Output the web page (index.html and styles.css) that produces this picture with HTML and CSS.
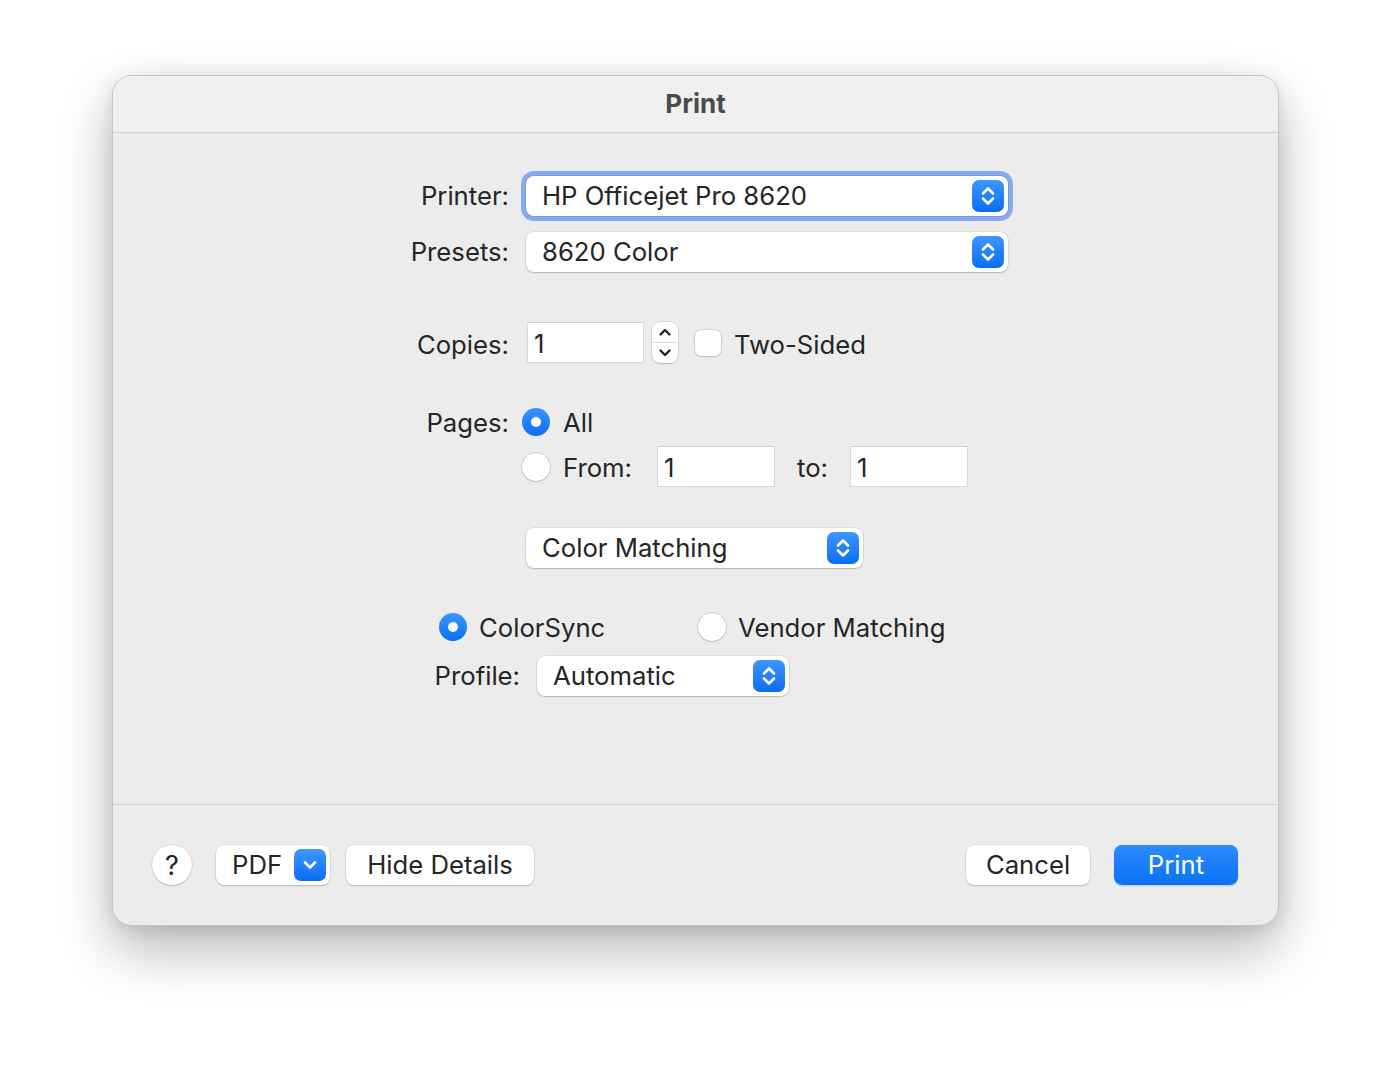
FILE: index.html
```html
<!DOCTYPE html>
<html>
<head>
<meta charset="utf-8">
<link rel="stylesheet" href="styles.css">
</head>
<body>
<div class="dialog">
  <div class="titlebar">Print</div>
  <div class="content">
    <div class="row r-printer">
      <div class="label">Printer:</div>
      <div class="popup focused w-wide">
        <span class="popup-text">HP Officejet Pro 8620</span>
        <svg class="pop-icon" width="32" height="32" viewBox="0 0 32 32"><defs><linearGradient id="g1" x1="0" y1="0" x2="0" y2="1"><stop offset="0" stop-color="#3d97ff"/><stop offset="1" stop-color="#0a6ef4"/></linearGradient></defs><rect width="32" height="32" rx="7" fill="url(#g1)"/><path d="M11 13.5 L16 8.5 L21 13.5 M11 18.5 L16 23.5 L21 18.5" fill="none" stroke="#fff" stroke-width="2.6" stroke-linecap="round" stroke-linejoin="round"/></svg>
      </div>
    </div>
    <div class="row r-presets">
      <div class="label">Presets:</div>
      <div class="popup w-wide">
        <span class="popup-text">8620 Color</span>
        <svg class="pop-icon" width="32" height="32" viewBox="0 0 32 32"><defs><linearGradient id="g2" x1="0" y1="0" x2="0" y2="1"><stop offset="0" stop-color="#3d97ff"/><stop offset="1" stop-color="#0a6ef4"/></linearGradient></defs><rect width="32" height="32" rx="7" fill="url(#g2)"/><path d="M11 13.5 L16 8.5 L21 13.5 M11 18.5 L16 23.5 L21 18.5" fill="none" stroke="#fff" stroke-width="2.6" stroke-linecap="round" stroke-linejoin="round"/></svg>
      </div>
    </div>
    <div class="row r-copies">
      <div class="label">Copies:</div>
      <div class="field f-copies">1</div>
      <div class="stepper">
        <svg width="26" height="41" viewBox="0 0 26 41"><path d="M8.5 12.5 L13 8 L17.5 12.5 M8.5 28.5 L13 33 L17.5 28.5" fill="none" stroke="#222" stroke-width="2.4" stroke-linecap="round" stroke-linejoin="round"/><line x1="1" y1="20.5" x2="25" y2="20.5" stroke="#dcdcdc" stroke-width="1"/></svg>
      </div>
      <div class="checkbox"></div>
      <span class="text t-two">Two-Sided</span>
    </div>
    <div class="row r-all">
      <div class="label">Pages:</div>
      <div class="radio on m13"></div>
      <span class="text t-rad">All</span>
    </div>
    <div class="row r-from">
      <div class="label"></div>
      <div class="radio m13"></div>
      <span class="text t-rad t-from">From:</span>
      <div class="field f-page">1</div>
      <span class="text t-to">to:</span>
      <div class="field f-page">1</div>
    </div>
    <div class="row r-cm">
      <div class="popup w-cm">
        <span class="popup-text">Color Matching</span>
        <svg class="pop-icon" width="32" height="32" viewBox="0 0 32 32"><defs><linearGradient id="g3" x1="0" y1="0" x2="0" y2="1"><stop offset="0" stop-color="#3d97ff"/><stop offset="1" stop-color="#0a6ef4"/></linearGradient></defs><rect width="32" height="32" rx="7" fill="url(#g3)"/><path d="M11 13.5 L16 8.5 L21 13.5 M11 18.5 L16 23.5 L21 18.5" fill="none" stroke="#fff" stroke-width="2.6" stroke-linecap="round" stroke-linejoin="round"/></svg>
      </div>
    </div>
    <div class="row r-sync">
      <div class="radio on"></div>
      <span class="text t-rad2 t-cs">ColorSync</span>
      <div class="radio"></div>
      <span class="text t-rad2">Vendor Matching</span>
    </div>
    <div class="row r-profile">
      <div class="label l-profile">Profile:</div>
      <div class="popup w-prof">
        <span class="popup-text">Automatic</span>
        <svg class="pop-icon" width="32" height="32" viewBox="0 0 32 32"><defs><linearGradient id="g4" x1="0" y1="0" x2="0" y2="1"><stop offset="0" stop-color="#3d97ff"/><stop offset="1" stop-color="#0a6ef4"/></linearGradient></defs><rect width="32" height="32" rx="7" fill="url(#g4)"/><path d="M11 13.5 L16 8.5 L21 13.5 M11 18.5 L16 23.5 L21 18.5" fill="none" stroke="#fff" stroke-width="2.6" stroke-linecap="round" stroke-linejoin="round"/></svg>
      </div>
    </div>
  </div>
  <div class="footer">
    <div class="left">
      <div class="help">?</div>
      <div class="btn b-pdf">
        <span>PDF</span>
        <svg class="pdf-icon" width="32" height="32" viewBox="0 0 32 32"><defs><linearGradient id="g5" x1="0" y1="0" x2="0" y2="1"><stop offset="0" stop-color="#3d97ff"/><stop offset="1" stop-color="#0a6ef4"/></linearGradient></defs><rect width="32" height="32" rx="7" fill="url(#g5)"/><path d="M11 13.5 L16 18.5 L21 13.5" fill="none" stroke="#fff" stroke-width="2.6" stroke-linecap="round" stroke-linejoin="round"/></svg>
      </div>
      <div class="btn b-hide">Hide Details</div>
    </div>
    <div class="right">
      <div class="btn b-cancel">Cancel</div>
      <div class="btn b-print">Print</div>
    </div>
  </div>
</div>
</body>
</html>
```

FILE: styles.css
```css
html, body {
  margin: 0;
  padding: 0;
}
body {
  background: #ffffff;
  font-family: "Inter", "Noto Sans", sans-serif;
  font-size: 25.7px;
  color: #252525;
  padding: 75px 0 0 112px;
  height: 1074px;
  box-sizing: border-box;
  overflow: hidden;
}
.dialog {
  width: 1167px;
  height: 851px;
  box-sizing: border-box;
  border: 1px solid #c4c4c4;
  border-radius: 20px;
  background: #ececec;
  box-shadow: 0 24px 55px rgba(0, 0, 0, 0.28), 0 4px 18px rgba(0, 0, 0, 0.1);
  display: flex;
  flex-direction: column;
  overflow: hidden;
}
.titlebar {
  height: 54px;
  padding-bottom: 2px;
  border-bottom: 1px solid #cfcfcf;
  background: #f0f0f0;
  display: flex;
  align-items: center;
  justify-content: center;
  font-weight: 700;
  color: #4b4b4b;
  font-size: 26px;
}
.content {
  height: 672px;
  box-sizing: border-box;
  padding-top: 43px;
  border-bottom: 1px solid #d2d2d2;
}
.row {
  display: flex;
  align-items: center;
}
.label {
  width: 396px;
  text-align: right;
  flex: none;
}
.popup {
  height: 40px;
  box-sizing: border-box;
  background: #ffffff;
  border-radius: 8px;
  box-shadow: 0 0 0 0.5px rgba(0, 0, 0, 0.12), 0 1px 1.5px rgba(0, 0, 0, 0.18);
  display: flex;
  align-items: center;
  justify-content: space-between;
  padding: 0 4px 0 16px;
  flex: none;
}
.popup-text {
  padding-bottom: 2px;
}
.popup.focused {
  box-shadow: 0 0 0 1px #6f9be9, 0 0 0 5px #8aaaee;
}
.pop-icon {
  display: block;
}
.w-wide {
  width: 482px;
  margin-left: 17px;
}
.r-printer {
  height: 40px;
}
.r-printer .label, .r-presets .label, .r-profile .label {
  padding-bottom: 2px;
}
.r-presets {
  height: 40px;
  margin-top: 16px;
}
.r-copies {
  height: 41px;
  margin-top: 50px;
}
.field {
  height: 41px;
  box-sizing: border-box;
  background: #ffffff;
  border: 1px solid #d9d9d9;
  border-top-color: #d0d0d0;
  display: flex;
  align-items: center;
  padding-left: 6px;
  padding-top: 2px;
  flex: none;
}
.f-copies {
  width: 117px;
  margin-left: 18px;
}
.stepper {
  width: 26px;
  height: 41px;
  margin-left: 8px;
  background: #ffffff;
  border-radius: 8px;
  box-shadow: 0 0 0 0.5px rgba(0, 0, 0, 0.14), 0 1px 1.5px rgba(0, 0, 0, 0.16);
  flex: none;
}
.stepper svg {
  display: block;
}
.checkbox {
  width: 26px;
  height: 26px;
  box-sizing: border-box;
  margin-left: 17px;
  background: #ffffff;
  border-radius: 6px;
  box-shadow: 0 0 0 0.5px rgba(0, 0, 0, 0.2), 0 1px 1.5px rgba(0, 0, 0, 0.12);
  flex: none;
}
.t-two {
  margin-left: 13px;
  padding-top: 3px;
}
.r-copies .label {
  padding-top: 3px;
}
.r-all {
  height: 40px;
  margin-top: 39px;
}
.r-from {
  height: 41px;
  margin-top: 4px;
}
.radio {
  width: 28px;
  height: 28px;
  border-radius: 50%;
  box-sizing: border-box;
  background: #ffffff;
  box-shadow: 0 0 0 0.5px rgba(0, 0, 0, 0.22), 0 1px 1.5px rgba(0, 0, 0, 0.12);
  flex: none;
  position: relative;
}
.radio.on {
  background: linear-gradient(#3a95ff, #0b6ff4);
  box-shadow: none;
}
.radio.on::after {
  content: "";
  position: absolute;
  left: 9px;
  top: 9px;
  width: 10px;
  height: 10px;
  border-radius: 50%;
  background: #ffffff;
}
.m13 {
  margin-left: 13px;
}
.t-rad {
  margin-left: 13px;
}
.r-all .label, .r-all .text, .r-from .text {
  padding-top: 1px;
}
.f-page {
  width: 118px;
}
.t-from {
  width: 94px;
  flex: none;
}
.t-to {
  margin-left: 22px;
  width: 53px;
  flex: none;
}
.r-cm {
  margin-top: 41px;
  padding-left: 413px;
}
.w-cm {
  width: 337px;
}
.r-sync {
  height: 40px;
  margin-top: 39px;
  padding-left: 326px;
}
.t-rad2 {
  margin-left: 12px;
  padding-top: 1px;
}
.t-cs {
  width: 219px;
  flex: none;
}
.r-profile {
  height: 40px;
  margin-top: 9px;
}
.l-profile {
  width: 407px;
}
.w-prof {
  width: 252px;
  margin-left: 17px;
}
.footer {
  flex: 1;
  display: flex;
  align-items: center;
  justify-content: space-between;
  padding: 0 40px 0 39px;
}
.left, .right {
  display: flex;
  align-items: center;
}
.help {
  width: 40px;
  height: 40px;
  border-radius: 50%;
  background: #ffffff;
  box-shadow: 0 0 0 0.5px rgba(0, 0, 0, 0.14), 0 1px 1.5px rgba(0, 0, 0, 0.18);
  display: flex;
  align-items: center;
  justify-content: center;
  font-size: 27px;
}
.btn {
  height: 40px;
  box-sizing: border-box;
  background: #ffffff;
  border-radius: 8px;
  box-shadow: 0 0 0 0.5px rgba(0, 0, 0, 0.12), 0 1px 1.5px rgba(0, 0, 0, 0.18);
  display: flex;
  align-items: center;
  justify-content: center;
  padding-bottom: 2px;
}
.b-pdf {
  width: 114px;
  margin-left: 24px;
  justify-content: space-between;
  padding: 0 4px 0 16px;
}
.b-pdf span {
  padding-bottom: 2px;
}
.pdf-icon {
  display: block;
}
.b-hide {
  width: 188px;
  margin-left: 16px;
}
.b-cancel {
  width: 124px;
}
.b-print {
  width: 124px;
  margin-left: 24px;
  background: linear-gradient(#2b8bff, #0a72f5);
  color: #ffffff;
  box-shadow: 0 1px 1.5px rgba(0, 0, 0, 0.15);
}
```
